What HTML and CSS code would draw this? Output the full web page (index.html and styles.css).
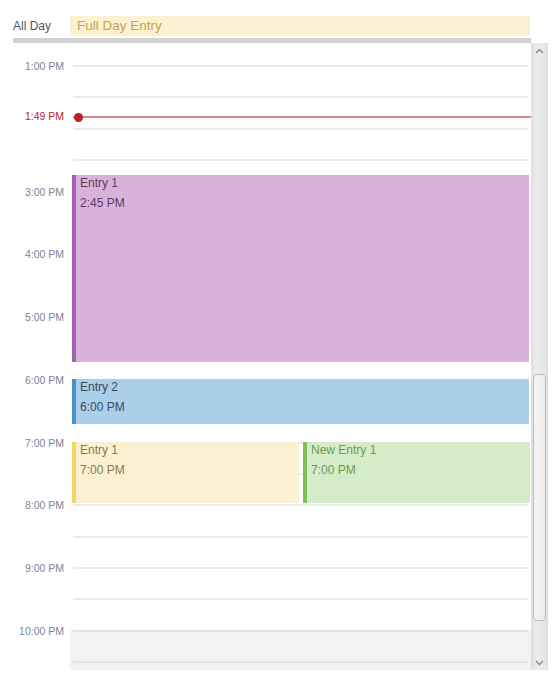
FILE: index.html
```html
<!DOCTYPE html>
<html>
<head>
<meta charset="utf-8">
<link rel="stylesheet" href="styles.css">
</head>
<body>
<div class="cal">
  <div class="allday-row">
    <div class="allday-label">All Day</div>
    <div class="allday-cell"><div class="allday-entry">Full Day Entry</div></div>
  </div>
  <div class="divider"></div>
  <div class="scroller">
    <div class="content">
      <div class="gutter">
        <div class="hour-label">1:00 PM</div>
        <div class="hour-label hidden">2:00 PM</div>
        <div class="hour-label">3:00 PM</div>
        <div class="hour-label">4:00 PM</div>
        <div class="hour-label">5:00 PM</div>
        <div class="hour-label">6:00 PM</div>
        <div class="hour-label">7:00 PM</div>
        <div class="hour-label">8:00 PM</div>
        <div class="hour-label">9:00 PM</div>
        <div class="hour-label">10:00 PM</div>
        <div class="now-label">1:49 PM</div>
      </div>
      <div class="day">
        <div class="slot"></div><div class="slot"></div>
        <div class="slot"></div><div class="slot"></div>
        <div class="slot"></div><div class="slot"></div>
        <div class="slot"></div><div class="slot"></div>
        <div class="slot"></div><div class="slot"></div>
        <div class="slot"></div><div class="slot"></div>
        <div class="slot"></div><div class="slot"></div>
        <div class="slot"></div><div class="slot"></div>
        <div class="slot"></div><div class="slot"></div>
        <div class="slot off"></div><div class="slot off"></div>
        <div class="slot off"></div>

        <div class="now-line"><span class="now-dot"></span></div>

        <div class="event purple" style="top:132px;height:187px;left:2px;right:2px">
          <div class="ev-title">Entry 1</div>
          <div class="ev-time">2:45 PM</div>
        </div>
        <div class="event blue" style="top:336px;height:45px;left:2px;right:2px">
          <div class="ev-title">Entry 2</div>
          <div class="ev-time">6:00 PM</div>
        </div>
        <div class="event yellow" style="top:399px;height:61px;left:2px;width:227px">
          <div class="ev-title">Entry 1</div>
          <div class="ev-time">7:00 PM</div>
        </div>
        <div class="event green" style="top:399px;height:61px;left:233px;right:1px">
          <div class="ev-title">New Entry 1</div>
          <div class="ev-time">7:00 PM</div>
        </div>
      </div>
    </div>
    <div class="scrollbar">
      <div class="sb-btn">
        <svg width="9" height="6" viewBox="0 0 9 6"><path d="M1 5 L4.5 1.5 L8 5" fill="none" stroke="#8a8a8a" stroke-width="1.4"/></svg>
      </div>
      <div class="sb-track">
        <div class="sb-thumb"></div>
      </div>
      <div class="sb-btn">
        <svg width="9" height="6" viewBox="0 0 9 6"><path d="M1 1 L4.5 4.5 L8 1" fill="none" stroke="#8a8a8a" stroke-width="1.4"/></svg>
      </div>
    </div>
  </div>
</div>
</body>
</html>
```

FILE: styles.css
```css
* { box-sizing: border-box; }
html, body { margin: 0; padding: 0; background: #fff; }
body { font-family: "Liberation Sans", Arial, sans-serif; }

.cal {
  margin-left: 13px;
  padding-top: 16px;
  width: 535px;
}

.allday-row {
  display: flex;
  height: 20px;
}
.allday-label {
  width: 57px;
  font-size: 12px;
  line-height: 20px;
  color: #555;
}
.allday-cell {
  width: 460px;
}
.allday-entry {
  height: 20px;
  background: #fcf1d2;
  color: #c9a446;
  font-size: 13.5px;
  line-height: 20px;
  padding-left: 7px;
}

.divider {
  margin-top: 2px;
  width: 518px;
  height: 5px;
  background: #d2d2d2;
}

.scroller {
  display: flex;
  height: 627px;
}
.content {
  width: 518px;
  display: flex;
  overflow: hidden;
}

.gutter {
  width: 57px;
  position: relative;
  padding-top: 17px;
}
.hour-label {
  height: 62.75px;
  font-size: 10.5px;
  line-height: 12px;
  text-align: right;
  padding-right: 6px;
  color: #7c8592;
}
.hour-label.hidden { visibility: hidden; }
.now-label {
  position: absolute;
  right: 6px;
  top: 67px;
  font-size: 10.5px;
  line-height: 12px;
  color: #b3262c;
}

.day {
  width: 461px;
  position: relative;
  padding-top: 22px;
}
.slot {
  height: 31.375px;
  position: relative;
}
.slot::before {
  content: "";
  position: absolute;
  left: 3px;
  right: 3px;
  top: 0;
  height: 2px;
  background: #ebebeb;
}
.slot.off { background: #f2f2f2; }
.slot.off::before { background: #e4e4e4; }

.now-line {
  position: absolute;
  left: 3px;
  right: 0;
  top: 73px;
  height: 2px;
  background: #d48a8c;
}
.now-dot {
  position: absolute;
  left: 1px;
  top: -3px;
  width: 9px;
  height: 9px;
  border-radius: 50%;
  background: #b52428;
}

.event {
  position: absolute;
  border-left: 4px solid;
  padding-left: 4px;
  display: flex;
  flex-direction: column;
  gap: 4px;
  font-size: 12px;
  line-height: 16px;
}
.event.purple { background: #d8b3d9; border-color: #a262ab; color: #5a3d5e; }
.event.blue { background: #abcfe9; border-color: #4990cd; color: #37495b; }
.event.yellow { background: #fcf0d2; border-color: #f6d46c; color: #8a7a54; }
.event.green { background: #d5ecc8; border-color: #7bc152; color: #6b9a55; }

.scrollbar {
  width: 17px;
  display: flex;
  flex-direction: column;
  background: linear-gradient(to right, #dedede, #ececec 30%, #e8e8e8 80%, #dcdcdc);
}
.sb-btn {
  height: 15px;
  display: flex;
  align-items: center;
  justify-content: center;
}
.sb-track {
  flex: 1;
  display: flex;
  flex-direction: column;
  justify-content: flex-end;
  padding: 0 2px 34px 2px;
}
.sb-thumb {
  height: 247px;
  border: 1px solid #bdbdbd;
  border-radius: 4px;
  background: linear-gradient(to right, #f4f4f4, #ececec);
}
```
